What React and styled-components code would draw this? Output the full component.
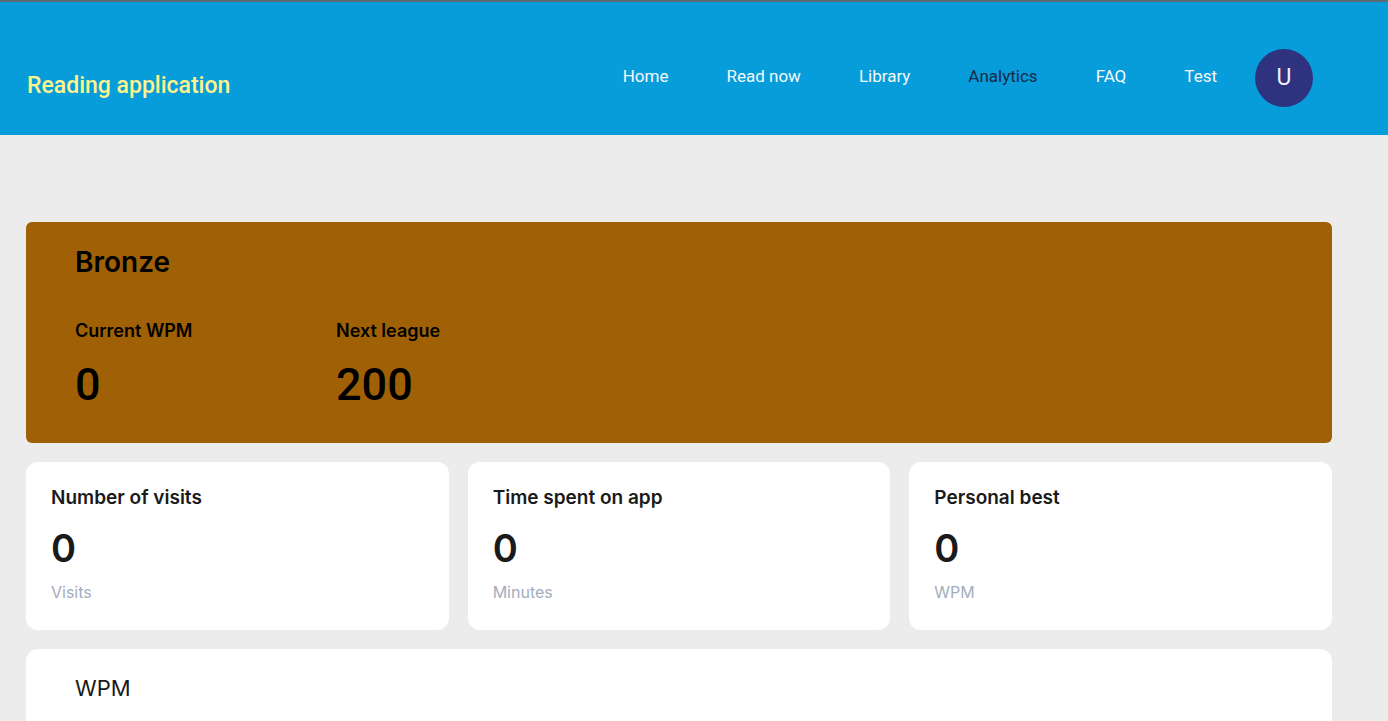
import React from 'react';
import styled, { createGlobalStyle } from 'styled-components';

const GlobalStyle = createGlobalStyle`
  html, body {
    margin: 0;
    padding: 0;
    background-color: #ECECEC;
    font-family: Roboto, "Liberation Sans", sans-serif;
  }
`;

const Header = styled.header`
  height: 133px;
  border-top: 2px solid #5f6b72;
  background-color: #069DDA;
  display: flex;
  align-items: center;
  padding: 0 75px 0 27px;
`;

const Logo = styled.div`
  font-size: 23px;
  font-weight: 500;
  color: #FFF38C;
  margin-top: 33px;
  flex: 1;
`;

const Nav = styled.nav`
  display: flex;
  align-items: center;
  gap: 58px;
  margin-top: 18px;
`;

const NavLink = styled.a`
  font-size: 17px;
  color: ${props => props.active ? '#17294a' : '#F4F8FB'};
  cursor: pointer;
  margin-top: -3px;
`;

const Avatar = styled.div`
  width: 58px;
  height: 58px;
  border-radius: 50%;
  background-color: #2E327F;
  color: #EEF0FF;
  display: flex;
  align-items: center;
  justify-content: center;
  font-size: 23px;
  margin-left: -20px;
`;

const Content = styled.main`
  padding: 87px 56px 0 26px;
  display: flex;
  flex-direction: column;
  gap: 19px;
  font-family: Inter, "Noto Sans", sans-serif;
`;

const LeagueCard = styled.section`
  background-color: #A06005;
  border-radius: 6px;
  height: 221px;
  box-sizing: border-box;
  padding: 24px 49px;
  color: #000;
`;

const LeagueName = styled.h2`
  margin: 0;
  font-size: 28px;
  font-weight: 600;
  line-height: 32px;
`;

const LeagueStats = styled.div`
  display: flex;
  margin-top: 42px;
`;

const LeagueStat = styled.div`
  width: 261px;
`;

const LeagueLabel = styled.div`
  font-size: 18px;
  font-weight: 600;
  line-height: 22px;
`;

const LeagueValue = styled.div`
  font-family: Roboto, "Liberation Sans", sans-serif;
  font-size: 45px;
  font-weight: 500;
  line-height: 52px;
  margin-top: 17px;
`;

const StatRow = styled.div`
  display: grid;
  grid-template-columns: repeat(3, 1fr);
  gap: 19px;
`;

const StatCard = styled.div`
  background: #fff;
  border-radius: 12px;
  height: 168px;
  box-sizing: border-box;
  padding: 24px 25px;
`;

const StatTitle = styled.div`
  font-size: 19px;
  font-weight: 600;
  color: #1a1a1a;
  line-height: 24px;
`;

const StatValue = styled.div`
  font-size: 38px;
  font-weight: 600;
  color: #1a1a1a;
  line-height: 44px;
  margin-top: 16px;
`;

const StatUnit = styled.div`
  font-size: 16px;
  color: #A3ADBD;
  line-height: 20px;
  margin-top: 12px;
`;

const ChartCard = styled.section`
  background: #fff;
  border-radius: 12px 12px 0 0;
  height: 90px;
  padding: 24px 49px 0;
`;

const ChartTitle = styled.h3`
  margin: 0;
  font-size: 22px;
  font-weight: 400;
  color: #1a1a1a;
  line-height: 30px;
`;

const navItems = ['Home', 'Read now', 'Library', 'Analytics', 'FAQ', 'Test'];

const stats = [
  { title: 'Number of visits', value: 0, unit: 'Visits' },
  { title: 'Time spent on app', value: 0, unit: 'Minutes' },
  { title: 'Personal best', value: 0, unit: 'WPM' }
];

export default function App() {
  return (
    <>
      <GlobalStyle />
      <Header>
        <Logo>Reading application</Logo>
        <Nav>
          {navItems.map(item => (
            <NavLink key={item} active={item === 'Analytics'}>{item}</NavLink>
          ))}
          <Avatar>U</Avatar>
        </Nav>
      </Header>
      <Content>
        <LeagueCard>
          <LeagueName>Bronze</LeagueName>
          <LeagueStats>
            <LeagueStat>
              <LeagueLabel>Current WPM</LeagueLabel>
              <LeagueValue>0</LeagueValue>
            </LeagueStat>
            <LeagueStat>
              <LeagueLabel>Next league</LeagueLabel>
              <LeagueValue>200</LeagueValue>
            </LeagueStat>
          </LeagueStats>
        </LeagueCard>
        <StatRow>
          {stats.map(s => (
            <StatCard key={s.title}>
              <StatTitle>{s.title}</StatTitle>
              <StatValue>{s.value}</StatValue>
              <StatUnit>{s.unit}</StatUnit>
            </StatCard>
          ))}
        </StatRow>
        <ChartCard>
          <ChartTitle>WPM</ChartTitle>
        </ChartCard>
      </Content>
    </>
  );
}
